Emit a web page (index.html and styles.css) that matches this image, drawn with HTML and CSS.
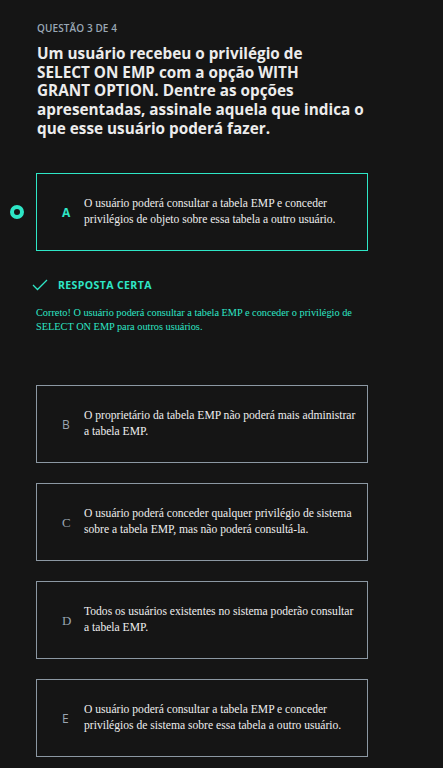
FILE: index.html
```html
<!DOCTYPE html>
<html lang="pt">
<head>
<meta charset="utf-8">
<link rel="stylesheet" href="styles.css">
</head>
<body>
<main class="quiz">
  <p class="counter">QUESTÃO 3 DE 4</p>
  <h1 class="question">Um usuário recebeu o privilégio de<br>SELECT ON EMP com a opção WITH<br>GRANT OPTION. Dentre as opções<br>apresentadas, assinale aquela que indica o<br>que esse usuário poderá fazer.</h1>

  <div class="option-row first">
    <div class="gutter"><span class="radio"></span></div>
    <div class="option selected">
      <span class="letter">A</span>
      <span class="text">O usuário poderá consultar a tabela EMP e conceder privilégios de objeto sobre essa tabela a outro usuário.</span>
    </div>
  </div>

  <div class="feedback">
    <div class="feedback-head">
      <svg class="check" width="16" height="12" viewBox="0 0 16 12"><path d="M1 6 L5.5 10.5 L15 1" fill="none" stroke="#2ee6c6" stroke-width="1.3"/></svg>
      <span>RESPOSTA CERTA</span>
    </div>
    <p class="explain">Correto! O usuário poderá consultar a tabela EMP e conceder o privilégio de SELECT ON EMP para outros usuários.</p>
  </div>

  <div class="option-row after-feedback">
    <div class="gutter"></div>
    <div class="option">
      <span class="letter">B</span>
      <span class="text">O proprietário da tabela EMP não poderá mais administrar a tabela EMP.</span>
    </div>
  </div>
  <div class="option-row">
    <div class="gutter"></div>
    <div class="option">
      <span class="letter serif">C</span>
      <span class="text">O usuário poderá conceder qualquer privilégio de sistema sobre a tabela EMP, mas não poderá consultá-la.</span>
    </div>
  </div>
  <div class="option-row">
    <div class="gutter"></div>
    <div class="option">
      <span class="letter serif">D</span>
      <span class="text">Todos os usuários existentes no sistema poderão consultar a tabela EMP.</span>
    </div>
  </div>
  <div class="option-row">
    <div class="gutter"></div>
    <div class="option">
      <span class="letter">E</span>
      <span class="text">O usuário poderá consultar a tabela EMP e conceder privilégios de sistema sobre essa tabela a outro usuário.</span>
    </div>
  </div>
</main>
</body>
</html>
```

FILE: styles.css
```css
html, body {
  margin: 0;
  background: #151515;
}
.quiz {
  width: 443px;
  height: 768px;
  overflow: hidden;
  font-family: "Open Sans", "Liberation Sans", sans-serif;
  box-sizing: border-box;
  padding-top: 21px;
}
.counter {
  margin: 0 0 0 37px;
  font-size: 10px;
  font-weight: 600;
  color: #9aa8b5;
  letter-spacing: 0.1px;
  line-height: 14px;
}
.question {
  margin: 9px 0 0 37px;
  font-size: 15.3px;
  font-weight: 700;
  line-height: 18.7px;
  color: #ececec;
  white-space: nowrap;
}
.option-row {
  display: flex;
  margin-top: 20px;
}
.option-row.first {
  margin-top: 35px;
}
.option-row.after-feedback {
  margin-top: 51px;
}
.gutter {
  width: 36px;
  display: flex;
  align-items: center;
  justify-content: center;
  flex: none;
}
.radio {
  width: 6px;
  height: 6px;
  border: 4px solid #2ee6c6;
  border-radius: 50%;
  margin-left: -3px;
}
.option {
  width: 332px;
  height: 78px;
  box-sizing: border-box;
  border: 1px solid #8c98a3;
  display: flex;
  align-items: center;
}
.option.selected {
  border-color: #2ee6c6;
}
.letter {
  width: 10px;
  margin-left: 25px;
  margin-right: 12px;
  flex: none;
  font-size: 12px;
  font-weight: 400;
  color: #9aa5b1;
  padding-top: 2px;
}
.selected .letter {
  color: #2ee6c6;
  font-weight: 700;
}
.letter.serif {
  font-family: "Liberation Serif", serif;
  font-size: 13px;
}
.text {
  font-family: "Liberation Serif", serif;
  font-size: 11.6px;
  line-height: 16px;
  color: #eeeeee;
  padding-right: 10px;
}
.feedback {
  margin-left: 36px;
  margin-right: 60px;
}
.feedback-head {
  display: flex;
  align-items: center;
  margin-top: 27px;
  margin-left: -4px;
  font-size: 10.5px;
  font-weight: 700;
  letter-spacing: 0.4px;
  color: #2ee6c6;
}
.check {
  margin-right: 10px;
}
.explain {
  margin: 14px 0 0;
  font-family: "Liberation Serif", serif;
  font-size: 10.3px;
  line-height: 14px;
  color: #2ee6c6;
}
```
